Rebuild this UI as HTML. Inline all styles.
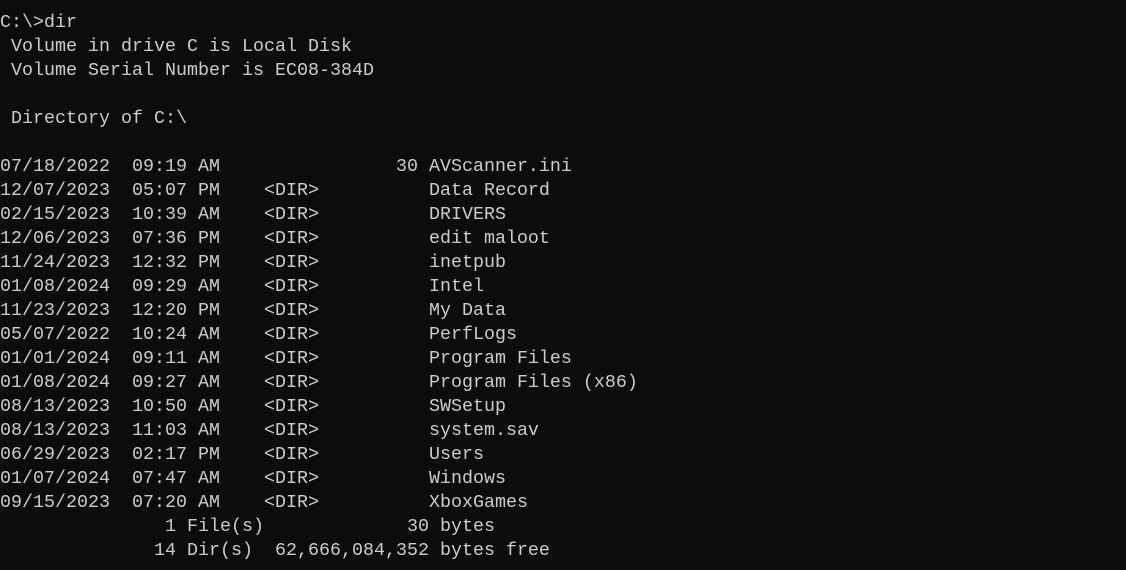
<!DOCTYPE html>
<html><head><meta charset="utf-8"><style>
html,body{margin:0;padding:0;background:#0c0c0c;width:1126px;height:570px;overflow:hidden}
pre{margin:0;padding:11px 0 0 0;font-family:"Liberation Mono",monospace;font-size:18.33px;line-height:24px;color:#cccccc;white-space:pre}
</style></head><body><pre>C:\&gt;dir
 Volume in drive C is Local Disk
 Volume Serial Number is EC08-384D

 Directory of C:\

07/18/2022  09:19 AM                30 AVScanner.ini
12/07/2023  05:07 PM    &lt;DIR&gt;          Data Record
02/15/2023  10:39 AM    &lt;DIR&gt;          DRIVERS
12/06/2023  07:36 PM    &lt;DIR&gt;          edit maloot
11/24/2023  12:32 PM    &lt;DIR&gt;          inetpub
01/08/2024  09:29 AM    &lt;DIR&gt;          Intel
11/23/2023  12:20 PM    &lt;DIR&gt;          My Data
05/07/2022  10:24 AM    &lt;DIR&gt;          PerfLogs
01/01/2024  09:11 AM    &lt;DIR&gt;          Program Files
01/08/2024  09:27 AM    &lt;DIR&gt;          Program Files (x86)
08/13/2023  10:50 AM    &lt;DIR&gt;          SWSetup
08/13/2023  11:03 AM    &lt;DIR&gt;          system.sav
06/29/2023  02:17 PM    &lt;DIR&gt;          Users
01/07/2024  07:47 AM    &lt;DIR&gt;          Windows
09/15/2023  07:20 AM    &lt;DIR&gt;          XboxGames
               1 File(s)             30 bytes
              14 Dir(s)  62,666,084,352 bytes free</pre></body></html>
